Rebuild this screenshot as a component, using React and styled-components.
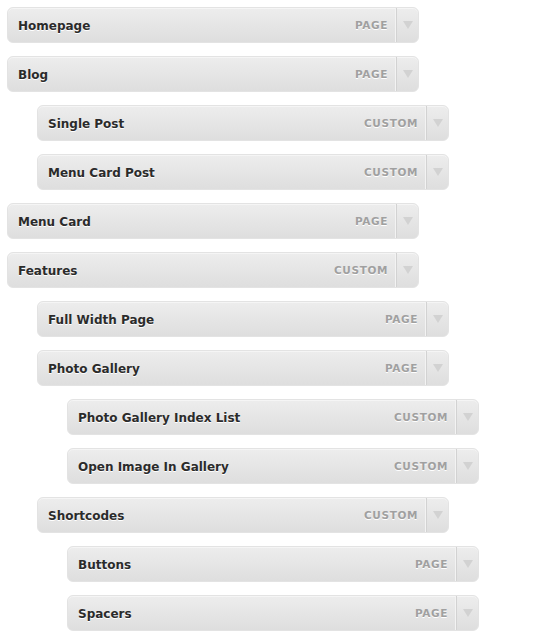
import React from 'react';
import styled, { createGlobalStyle } from 'styled-components';

const GlobalStyle = createGlobalStyle`
  body {
    margin: 0;
    background: #ffffff;
    font-family: "DejaVu Sans", Verdana, sans-serif;
  }
`;

const MenuList = styled.ul`
  list-style: none;
  margin: 0;
  padding: 7px 0 0 7px;
  display: flex;
  flex-direction: column;
  gap: 13px;
`;

const MenuItem = styled.li`
  margin-left: ${(p) => p.$depth * 30}px;
  width: 412px;
  height: 36px;
  box-sizing: border-box;
  display: flex;
  align-items: center;
  border: 1px solid #e3e3e3;
  border-radius: 6px;
  background: linear-gradient(to bottom, #ededed 0%, #dedede 100%);
  box-shadow: inset 0 1px 0 #f5f5f5;
`;

const Title = styled.span`
  flex: 1;
  padding-left: 10px;
  padding-top: 1px;
  font-size: 12px;
  font-weight: bold;
  color: #2b2b2b;
  text-shadow: 0 1px 0 #ffffff;
`;

const TypeLabel = styled.span`
  font-size: 10.5px;
  font-weight: bold;
  letter-spacing: 0.6px;
  color: #a0a0a0;
  text-transform: uppercase;
  padding-right: 8px;
  padding-bottom: 1px;
  text-shadow: 0 1px 0 #ffffff;
`;

const Toggle = styled.span`
  width: 21px;
  height: 100%;
  border-left: 1px solid #d2d2d2;
  box-shadow: -1px 0 0 #f3f3f3;
  display: flex;
  align-items: center;
  justify-content: center;
`;

const Arrow = () => (
  <svg width="10" height="8" viewBox="0 0 10 8">
    <path d="M0 0 H10 L5 8 Z" fill="#d2d2d2" />
  </svg>
);

const items = [
  { title: 'Homepage', type: 'Page', depth: 0 },
  { title: 'Blog', type: 'Page', depth: 0 },
  { title: 'Single Post', type: 'Custom', depth: 1 },
  { title: 'Menu Card Post', type: 'Custom', depth: 1 },
  { title: 'Menu Card', type: 'Page', depth: 0 },
  { title: 'Features', type: 'Custom', depth: 0 },
  { title: 'Full Width Page', type: 'Page', depth: 1 },
  { title: 'Photo Gallery', type: 'Page', depth: 1 },
  { title: 'Photo Gallery Index List', type: 'Custom', depth: 2 },
  { title: 'Open Image In Gallery', type: 'Custom', depth: 2 },
  { title: 'Shortcodes', type: 'Custom', depth: 1 },
  { title: 'Buttons', type: 'Page', depth: 2 },
  { title: 'Spacers', type: 'Page', depth: 2 },
];

const App = () => (
  <>
    <GlobalStyle />
    <MenuList>
      {items.map((item) => (
        <MenuItem key={item.title} $depth={item.depth}>
          <Title>{item.title}</Title>
          <TypeLabel>{item.type}</TypeLabel>
          <Toggle>
            <Arrow />
          </Toggle>
        </MenuItem>
      ))}
    </MenuList>
  </>
);

export default App;
